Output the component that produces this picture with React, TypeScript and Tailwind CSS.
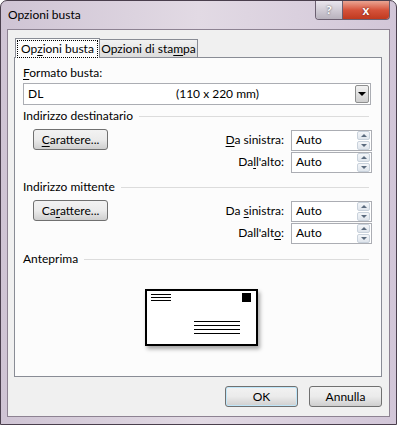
import React from "react";

const font = { fontFamily: 'Lato, "Noto Sans", sans-serif' };

function U({ children }: { children: React.ReactNode }) {
  return <span className="underline underline-offset-2">{children}</span>;
}

function Spinner() {
  return (
    <div className="flex w-[14px] flex-col gap-px py-px pr-px">
      <div className="flex h-[9px] items-center justify-center rounded-[2px] border border-[#c9d2dc] bg-gradient-to-b from-[#f4f6f9] to-[#dfe5ec]">
        <div className="h-0 w-0 border-x-[3px] border-b-[3px] border-x-transparent border-b-[#5b6b7e]" />
      </div>
      <div className="flex h-[9px] items-center justify-center rounded-[2px] border border-[#c9d2dc] bg-gradient-to-b from-[#f4f6f9] to-[#dfe5ec]">
        <div className="h-0 w-0 border-x-[3px] border-t-[3px] border-x-transparent border-t-[#5b6b7e]" />
      </div>
    </div>
  );
}

function NumField({ label }: { label: React.ReactNode }) {
  return (
    <div className="flex h-[22px] items-center">
      <div className="w-[70px] whitespace-nowrap pr-[7px] text-right">{label}</div>
      <div className="flex h-[21px] w-[81px] items-center justify-between border border-[#abadb3] bg-white pl-[4px]">
        <span>Auto</span>
        <Spinner />
      </div>
    </div>
  );
}

function Button({ children, className = "" }: { children: React.ReactNode; className?: string }) {
  return (
    <div
      className={
        "flex h-[21px] items-center justify-center whitespace-nowrap rounded-[3px] border border-[#707070] bg-gradient-to-b from-[#f2f2f2] via-[#ebebeb] to-[#cfcfcf] " +
        className
      }
    >
      {children}
    </div>
  );
}

function GroupHeader({ title }: { title: string }) {
  return (
    <div className="flex h-[16px] items-center gap-[6px] pr-[10px]">
      <span className="whitespace-nowrap">{title}</span>
      <div className="h-px flex-1 bg-[#dcdcdc]" />
    </div>
  );
}

function AddressGroup({
  title,
  btn,
  left,
  top,
}: {
  title: string;
  btn: React.ReactNode;
  left: React.ReactNode;
  top: React.ReactNode;
}) {
  return (
    <div className="flex flex-col">
      <GroupHeader title={title} />
      <div className="flex justify-between pr-[7px] pt-[5px]">
        <Button className="ml-[10px] w-[75px]">{btn}</Button>
        <div className="flex flex-col">
          <NumField label={left} />
          <NumField label={top} />
        </div>
      </div>
    </div>
  );
}

function Envelope() {
  return (
    <div className="relative flex h-[57px] w-[113px] flex-col justify-between border-2 border-black bg-white px-[4px] pb-[10px] pt-[2px] shadow-[2px_3px_4px_rgba(0,0,0,0.35)]">
      <div className="flex justify-between">
        <div className="flex w-[20px] flex-col gap-[2px] pt-[1px]">
          <div className="h-px bg-black" />
          <div className="h-px bg-black" />
          <div className="h-px bg-black" />
        </div>
        <div className="mr-[1px] h-[9px] w-[9px] bg-black" />
      </div>
      <div className="ml-[43px] flex w-[46px] flex-col gap-[3px]">
        <div className="h-px bg-black" />
        <div className="h-px bg-black" />
        <div className="h-px bg-black" />
        <div className="h-px bg-black" />
      </div>
    </div>
  );
}

export default function App() {
  return (
    <div
      className="flex h-[425px] w-[397px] flex-col overflow-hidden rounded-t-[7px] border border-[#4a3f4d] bg-gradient-to-r from-[#cfc4d4] via-[#e2dae4] to-[#d2c6d8] text-[12px] leading-none text-black"
      style={font}
    >
      {/* title bar */}
      <div className="flex h-[28px] items-start justify-between">
        <div className="pl-[7px] pt-[8px] text-[12px] text-black">Opzioni busta</div>
        <div className="mr-[6px] flex h-[19px] overflow-hidden rounded-b-[4px] border border-t-0 border-[#6b5f70]">
          <div className="flex w-[27px] items-center justify-center border-r border-[#6b5f70] bg-gradient-to-b from-[#eae6ee] to-[#b8b2bd] text-[12px] font-bold text-white [text-shadow:0_0_2px_#444]">
            ?
          </div>
          <div className="flex w-[46px] items-center justify-center bg-gradient-to-b from-[#e9a493] via-[#d6533b] to-[#c0391e] text-[13px] font-bold text-white [text-shadow:0_0_2px_#5a1206]">
            x
          </div>
        </div>
      </div>

      {/* client area */}
      <div className="mx-[6px] mb-[7px] flex flex-1 flex-col border border-[#8d8292] bg-[#f0f0f0]">
        {/* tabs */}
        <div className="flex h-[27px] items-end pl-[7px] pt-[8px]">
          <div className="relative z-10 -mb-px flex h-[20px] w-[85px] items-center justify-center whitespace-nowrap border border-b-0 border-[#898c95] bg-[#fcfcfc]">
            <span className="border border-dotted border-black px-[3px] py-[2px]">
              Op<U>z</U>ioni busta
            </span>
          </div>
          <div className="flex h-[18px] w-[98px] items-center justify-center whitespace-nowrap border border-b-0 border-l-0 border-[#898c95] bg-gradient-to-b from-[#f2f2f2] to-[#dcdcdc]">
            Opzioni di sta<U>m</U>pa
          </div>
        </div>

        {/* panel */}
        <div className="ml-[6px] mr-[7px] flex h-[320px] flex-col border border-[#898c95] bg-[#fcfcfc] pl-[8px] pr-[2px] pt-[9px]">
          <div className="h-[16px]">
            <U>F</U>ormato busta:
          </div>
          <div className="mr-[8px] flex h-[22px] items-center whitespace-nowrap border border-[#abadb3] bg-white pl-[4px]">
            <span className="w-[148px]">DL</span>
            <span className="flex-1">(110 x 220 mm)</span>
            <div className="mr-px flex h-[18px] w-[14px] items-center justify-center rounded-[2px] border border-[#8e8f8f] bg-gradient-to-b from-[#f2f2f2] to-[#cfcfcf]">
              <div className="h-0 w-0 border-x-[4px] border-t-[4px] border-x-transparent border-t-black" />
            </div>
          </div>

          <div className="mt-[3px]">
            <AddressGroup
              title="Indirizzo destinatario"
              btn={
                <span>
                  <U>C</U>arattere...
                </span>
              }
              left={
                <span>
                  <U>D</U>a sinistra:
                </span>
              }
              top={
                <span>
                  Da<U>l</U>l'alto:
                </span>
              }
            />
          </div>

          <div className="mt-[6px]">
            <AddressGroup
              title="Indirizzo mittente"
              btn={
                <span>
                  Ca<U>r</U>attere...
                </span>
              }
              left={
                <span>
                  Da <U>s</U>inistra:
                </span>
              }
              top={
                <span>
                  Dall'alt<U>o</U>:
                </span>
              }
            />
          </div>

          <div className="mt-[7px]">
            <GroupHeader title="Anteprima" />
          </div>

          <div className="flex justify-center pr-[8px] pt-[22px]">
            <div className="ml-[8px]">
              <Envelope />
            </div>
          </div>
        </div>

        {/* buttons */}
        <div className="flex justify-end gap-[11px] pr-[7px] pt-[9px]">
          <Button className="w-[73px] border-[#3c7fb1] from-[#eaf6fd] via-[#d9f0fc] to-[#a7d9f5] shadow-[inset_0_0_0_1px_#bfe6f9]">
            OK
          </Button>
          <Button className="w-[73px]">Annulla</Button>
        </div>
      </div>
    </div>
  );
}
